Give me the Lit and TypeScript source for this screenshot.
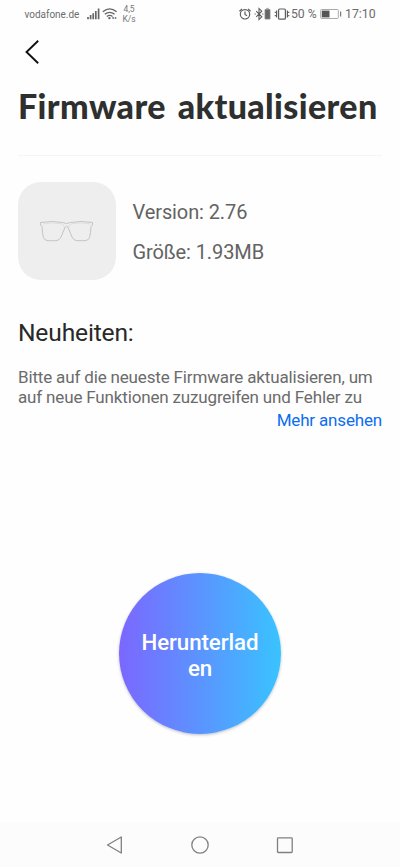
import { LitElement, html, css } from "lit";
import { customElement, property } from "lit/decorators.js";

@customElement("status-bar")
class StatusBar extends LitElement {
  static styles = css`
    :host { display: flex; height: 28px; align-items: center; justify-content: space-between; padding: 0 24px; box-sizing: border-box; color: #6c6c6c; font-family: Roboto, sans-serif; }
    .group { display: flex; align-items: center; height: 28px; }
    svg { display: block; }
    .carrier { font-size: 10px; width: 62px; letter-spacing: -0.03px; text-indent: 0.5px; }
    .rate { font-size: 8.5px; line-height: 10px; width: 18px; margin-left: 2px; text-align: center; color: #777; letter-spacing: -0.1px; }
    .percent { font-size: 12.2px; width: 28px; white-space: nowrap; margin-left: 1px; margin-right: 1px; }
    .time { font-size: 12.3px; width: 31px; margin-left: 3px; white-space: nowrap; }
  `;
  render() {
    return html`
      <div class="group">
        <span class="carrier">vodafone.de</span>
        <svg width="32" height="28" viewBox="86 0 32 28" fill="none" stroke="#666">
          <path stroke-width="1.7" d="M88 19.3v-2.2M90.6 19.3v-4.2M93.2 19.3v-6M95.8 19.3v-8.2M98.6 19.3V8.5" />
          <path stroke-width="1.3" d="M102.8 11.8q6.9-5.8 13.8 0M104.8 14.2q4.9-3.8 9.8 0M106.8 16.5q2.9-2.1 5.8 0" />
          <circle cx="109.4" cy="18.1" r="1.2" fill="#666" stroke="none" />
          <path stroke-width="1.7" d="M112.3 18h1.7M114.7 18h1.7" />
        </svg>
        <div class="rate">4,5<br />K/s</div>
      </div>
      <div class="group">
        <svg width="52" height="28" viewBox="237 0 52 28" fill="none" stroke="#5f5f5f" stroke-width="1.2">
          <circle cx="244" cy="14.3" r="4.7" />
          <path d="M244 11.5v3l2 1.2M238.4 11.2l2.6-2.3M249.6 11.2L247 8.9" />
          <path d="M255.2 11.2l5.6 5.6-2.8 2.6V8.6l2.8 2.6-5.6 5.6M253.6 14h1.2M261.3 14h1.2" stroke-width="1.1" />
          <path d="M264 9.5h5v9.5h-5zM265.3 8.4h2.4" fill="#666" stroke="#888" stroke-width=".8" />
          <rect x="277.6" y="9" width="6.8" height="10.2" rx="1" />
          <path d="M275.6 10.500v7M286.4 10.500v7M274.3 11.700v1.200M274.3 15v1.200M287.700 11.700v1.200M287.700 15v1.200" />
        </svg>
        <span class="percent">50 %</span>
        <svg width="22" height="28" viewBox="320 0 22 28">
          <rect x="320.7" y="9.5" width="17.6" height="9" rx=".8" fill="none" stroke="#aaa" />
          <path d="M321.8 10.6h7.7v6.8h-7.7z" fill="#555" />
          <path d="M340 11.5h1.2v5H340z" fill="#777" />
        </svg>
        <span class="time">17:10</span>
      </div>
    `;
  }
}

@customElement("firmware-card")
class FirmwareCard extends LitElement {
  @property() version = "";
  @property() size = "";
  static styles = css`
    :host { display: flex; gap: 17px; font-family: Roboto, sans-serif; }
    .thumb { width: 97.5px; height: 98px; border-radius: 23px; background: #eeeeee; display: grid; place-items: center; }
    .facts { font-size: 20px; line-height: 40px; letter-spacing: -0.1px; color: #636363; padding-top: 10px; white-space: nowrap; }
    svg { display: block; }
  `;
  render() {
    return html`
      <div class="thumb">
        <svg width="98" height="98" viewBox="18 182 98 98" fill="none" stroke="#c4c4c4" stroke-width="1" stroke-linejoin="round">
          <path d="M40.500 222.500Q52 220.500 62.500 222.500Q66.500 224.500 70.500 222.500Q81 220.500 92.500 222.500V225L91 226.500Q90.800 233 89.500 237.500Q88.500 240.500 85 240.700H77Q73.500 240.500 72 237L67.800 227Q66.500 225.500 65.200 227L61 237Q59.500 240.500 56 240.700H48Q44.500 240.500 43.500 237.500Q42.200 233 42 226.500L40.500 225Z" />
          <path d="M43 224Q53 221.800 61.500 223.800Q65 225 64 227.500M90 224Q80 221.800 71.500 223.800Q68 225 69 227.500" stroke="#dadada" stroke-width=".8" />
        </svg>
      </div>
      <div class="facts">
        <div>Version: ${this.version}</div>
        <div>Größe: ${this.size}</div>
      </div>
    `;
  }
}

@customElement("app-root")
class AppRoot extends LitElement {
  static styles = css`
    :host { display: flex; flex-direction: column; width: 400px; height: 867px; background: #fefefe; font-family: Roboto, sans-serif; overflow: hidden; }
    svg { display: block; }
    .back { margin: 12px 0 0 24px; width: 16px; height: 24px; }
    main { display: flex; flex-direction: column; flex: 1; padding: 0 18px; }
    h1 { font: 900 34px/44px Lato, sans-serif; color: #2e302f; margin: 20px 0 0; white-space: nowrap; letter-spacing: 0.38px; word-spacing: 3.5px; }
    .rule { height: 1px; background: #f5f5f5; margin: 27px 0 26px; }
    h2 { font-size: 24.6px; line-height: 32px; letter-spacing: -0.17px; font-weight: 400; color: #292929; margin: 37px 0 0; }
    .notes { font-size: 17px; line-height: 20px; letter-spacing: -0.16px; color: #6b6b6b; margin: 18px 0 0; white-space: nowrap; }
    .more { font-size: 17px; line-height: 24px; letter-spacing: -0.17px; color: #0c6df0; align-self: flex-end; margin-top: 1px; }
    .download { align-self: center; margin-top: 141px; width: 162px; height: 161px; border: 0; padding: 2px 0 0; border-radius: 50%; background: linear-gradient(90deg, #7b67ff, #5b94ff 50%, #39c3ff); color: #fff; font: 500 22.3px/26px Roboto, sans-serif; letter-spacing: -0.08px; box-shadow: 0 1px 3px rgba(0, 0, 0, 0.25); }
    nav { height: 44px; background: #fcfcfc; }
  `;
  render() {
    return html`
      <status-bar></status-bar>
      <svg class="back" viewBox="24 40 16 24" fill="none" stroke="#111" stroke-width="1.9"><path d="M38.200 40.800L26.500 52L38.200 63.300" /></svg>
      <main>
        <h1>Firmware aktualisieren</h1>
        <div class="rule"></div>
        <firmware-card version="2.76" size="1.93MB"></firmware-card>
        <h2>Neuheiten:</h2>
        <div class="notes">Bitte auf die neueste Firmware aktualisieren, um<br />auf neue Funktionen zuzugreifen und Fehler zu</div>
        <div class="more">Mehr ansehen</div>
        <button class="download">Herunterlad<br />en</button>
      </main>
      <nav>
        <svg width="400" height="44" viewBox="0 823 400 44" fill="none" stroke="#808080" stroke-width="1.3" stroke-linejoin="round">
          <path d="M107.500 845L121.300 837V853Z" />
          <circle cx="200" cy="845" r="8.200" />
          <rect x="277.500" y="837.800" width="14.700" height="14.700" rx=".8" />
        </svg>
      </nav>
    `;
  }
}
